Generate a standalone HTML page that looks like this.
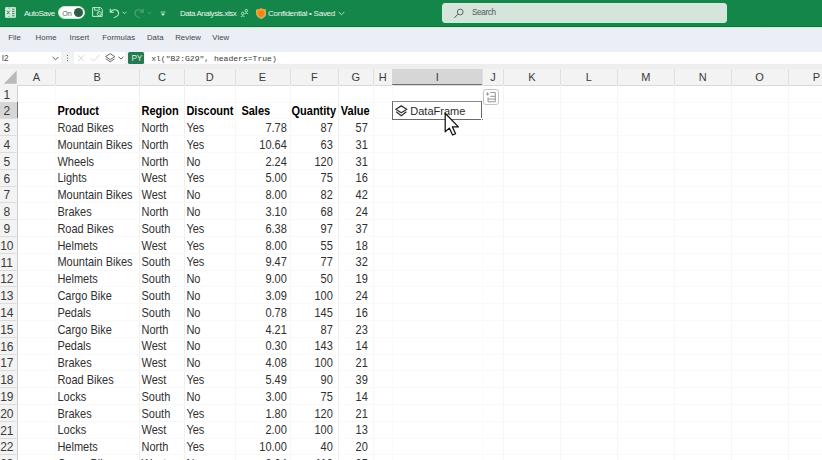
<!DOCTYPE html>
<html><head><meta charset="utf-8">
<style>
*{margin:0;padding:0;box-sizing:border-box}
html,body{width:822px;height:460px;overflow:hidden;background:#fff;font-family:"Liberation Sans",sans-serif;position:relative}
.a{position:absolute}
.t{position:absolute;white-space:nowrap;line-height:1}
#title{left:0;top:0;width:822px;height:27px;background:#15864a;border-bottom:1px solid #0f743e}
#tline{left:0;top:27px;width:822px;height:1px;background:#b8f7d2}
#ribbon{left:0;top:28px;width:822px;height:24px;background:linear-gradient(#e2f3ec,#ebeef5 3px,#ebeef5)}
#fbar{left:0;top:51.7px;width:822px;height:12.3px;background:#f1f2f4}
#hband{left:0;top:64px;width:822px;height:21.3px;background:#f3f3f4}
#hband2{left:0;top:64px;width:822px;height:4.5px;background:#eeeeee}
.tab{font-size:7.8px;color:#454545;top:34.3px;letter-spacing:0.05px}
.ch{font-size:11px;color:#3a3a3a;top:72px;text-align:center}
.rh{font-size:12px;color:#3a3a3a;left:-0.2px;width:14px;text-align:center}
.c{font-size:11px;color:#303030;transform:scaleY(1.08);transform-origin:0 9.3px}
.b{font-weight:bold;color:#000}
.r{text-align:right}
</style></head><body>

<div class="a" id="title"></div><div class="a" id="tline"></div>
<div class="a" id="ribbon"></div><div class="a" id="fbar"></div><div class="a" id="hband"></div><div class="a" id="hband2"></div>
<div class="t tab" style="left:8.2px">File</div>
<div class="t tab" style="left:35.6px">Home</div>
<div class="t tab" style="left:69.5px">Insert</div>
<div class="t tab" style="left:102.2px">Formulas</div>
<div class="t tab" style="left:146.9px">Data</div>
<div class="t tab" style="left:175.2px">Review</div>
<div class="t tab" style="left:212.3px">View</div>
<div class="a" style="left:54.5px;top:69.0px;width:1px;height:16.299999999999997px;background:#e0e0e0"></div>
<div class="t ch" style="left:18px;width:37px">A</div>
<div class="a" style="left:139.0px;top:69.0px;width:1px;height:16.299999999999997px;background:#e0e0e0"></div>
<div class="t ch" style="left:55px;width:84.5px">B</div>
<div class="a" style="left:184.0px;top:69.0px;width:1px;height:16.299999999999997px;background:#e0e0e0"></div>
<div class="t ch" style="left:139.5px;width:45.0px">C</div>
<div class="a" style="left:234.5px;top:69.0px;width:1px;height:16.299999999999997px;background:#e0e0e0"></div>
<div class="t ch" style="left:184.5px;width:50.5px">D</div>
<div class="a" style="left:289.5px;top:69.0px;width:1px;height:16.299999999999997px;background:#e0e0e0"></div>
<div class="t ch" style="left:235px;width:55px">E</div>
<div class="a" style="left:338.0px;top:69.0px;width:1px;height:16.299999999999997px;background:#e0e0e0"></div>
<div class="t ch" style="left:290px;width:48.5px">F</div>
<div class="a" style="left:372.5px;top:69.0px;width:1px;height:16.299999999999997px;background:#e0e0e0"></div>
<div class="t ch" style="left:338.5px;width:34.5px">G</div>
<div class="a" style="left:391.8px;top:69.0px;width:1px;height:16.299999999999997px;background:#e0e0e0"></div>
<div class="t ch" style="left:373px;width:19.30000000000001px">H</div>
<div class="a" style="left:392.3px;top:69.0px;width:90.09999999999997px;height:16.299999999999997px;background:#d6d6d6;border-bottom:1.5px solid #707070"></div>
<div class="a" style="left:481.9px;top:69.0px;width:1px;height:16.299999999999997px;background:#e0e0e0"></div>
<div class="t ch" style="left:392.3px;width:90.09999999999997px">I</div>
<div class="a" style="left:503.1px;top:69.0px;width:1px;height:16.299999999999997px;background:#e0e0e0"></div>
<div class="t ch" style="left:482.4px;width:21.200000000000045px">J</div>
<div class="a" style="left:560.0px;top:69.0px;width:1px;height:16.299999999999997px;background:#e0e0e0"></div>
<div class="t ch" style="left:503.6px;width:56.89999999999998px">K</div>
<div class="a" style="left:616.7px;top:69.0px;width:1px;height:16.299999999999997px;background:#e0e0e0"></div>
<div class="t ch" style="left:560.5px;width:56.700000000000045px">L</div>
<div class="a" style="left:674.0px;top:69.0px;width:1px;height:16.299999999999997px;background:#e0e0e0"></div>
<div class="t ch" style="left:617.2px;width:57.299999999999955px">M</div>
<div class="a" style="left:730.5px;top:69.0px;width:1px;height:16.299999999999997px;background:#e0e0e0"></div>
<div class="t ch" style="left:674.5px;width:56.5px">N</div>
<div class="a" style="left:787.5px;top:69.0px;width:1px;height:16.299999999999997px;background:#e0e0e0"></div>
<div class="t ch" style="left:731px;width:57px">O</div>
<div class="a" style="left:844.5px;top:69.0px;width:1px;height:16.299999999999997px;background:#e0e0e0"></div>
<div class="t ch" style="left:788px;width:57px">P</div>
<div class="a" style="left:0;top:84.8px;width:822px;height:1px;background:#d9d9d9"></div>
<svg class="a" style="left:0;top:64px" width="18" height="22"><path d="M3.8 19.7 L16.7 6.6 L16.7 19.7 Z" fill="#b9b9b9"/></svg>
<div class="a" style="left:0;top:85.3px;width:17.6px;height:400px;background:#f3f3f3"></div>
<div class="a" style="left:17.1px;top:85.3px;width:1px;height:400px;background:#d0d0d0"></div>
<div class="a" style="left:0;top:101.6px;width:17.6px;height:1px;background:#dcdcdc"></div>
<div class="t rh" style="top:88.5px">1</div>
<div class="a" style="left:0;top:102.1px;width:17.6px;height:16.8px;background:#d6d6d6;border-right:1.5px solid #707070"></div>
<div class="a" style="left:0;top:118.39999999999999px;width:17.6px;height:1px;background:#dcdcdc"></div>
<div class="t rh" style="top:105.3px">2</div>
<div class="a" style="left:0;top:135.20000000000002px;width:17.6px;height:1px;background:#dcdcdc"></div>
<div class="t rh" style="top:122.10000000000001px">3</div>
<div class="a" style="left:0;top:152.0px;width:17.6px;height:1px;background:#dcdcdc"></div>
<div class="t rh" style="top:138.89999999999998px">4</div>
<div class="a" style="left:0;top:168.8px;width:17.6px;height:1px;background:#dcdcdc"></div>
<div class="t rh" style="top:155.7px">5</div>
<div class="a" style="left:0;top:185.60000000000002px;width:17.6px;height:1px;background:#dcdcdc"></div>
<div class="t rh" style="top:172.5px">6</div>
<div class="a" style="left:0;top:202.40000000000003px;width:17.6px;height:1px;background:#dcdcdc"></div>
<div class="t rh" style="top:189.3px">7</div>
<div class="a" style="left:0;top:219.20000000000002px;width:17.6px;height:1px;background:#dcdcdc"></div>
<div class="t rh" style="top:206.1px">8</div>
<div class="a" style="left:0;top:236.0px;width:17.6px;height:1px;background:#dcdcdc"></div>
<div class="t rh" style="top:222.89999999999998px">9</div>
<div class="a" style="left:0;top:252.8px;width:17.6px;height:1px;background:#dcdcdc"></div>
<div class="t rh" style="top:239.7px">10</div>
<div class="a" style="left:0;top:269.6px;width:17.6px;height:1px;background:#dcdcdc"></div>
<div class="t rh" style="top:256.5px">11</div>
<div class="a" style="left:0;top:286.40000000000003px;width:17.6px;height:1px;background:#dcdcdc"></div>
<div class="t rh" style="top:273.3px">12</div>
<div class="a" style="left:0;top:303.20000000000005px;width:17.6px;height:1px;background:#dcdcdc"></div>
<div class="t rh" style="top:290.1px">13</div>
<div class="a" style="left:0;top:320.0px;width:17.6px;height:1px;background:#dcdcdc"></div>
<div class="t rh" style="top:306.9px">14</div>
<div class="a" style="left:0;top:336.8px;width:17.6px;height:1px;background:#dcdcdc"></div>
<div class="t rh" style="top:323.7px">15</div>
<div class="a" style="left:0;top:353.6px;width:17.6px;height:1px;background:#dcdcdc"></div>
<div class="t rh" style="top:340.5px">16</div>
<div class="a" style="left:0;top:370.40000000000003px;width:17.6px;height:1px;background:#dcdcdc"></div>
<div class="t rh" style="top:357.3px">17</div>
<div class="a" style="left:0;top:387.20000000000005px;width:17.6px;height:1px;background:#dcdcdc"></div>
<div class="t rh" style="top:374.1px">18</div>
<div class="a" style="left:0;top:404.00000000000006px;width:17.6px;height:1px;background:#dcdcdc"></div>
<div class="t rh" style="top:390.90000000000003px">19</div>
<div class="a" style="left:0;top:420.8px;width:17.6px;height:1px;background:#dcdcdc"></div>
<div class="t rh" style="top:407.7px">20</div>
<div class="a" style="left:0;top:437.6px;width:17.6px;height:1px;background:#dcdcdc"></div>
<div class="t rh" style="top:424.5px">21</div>
<div class="a" style="left:0;top:454.40000000000003px;width:17.6px;height:1px;background:#dcdcdc"></div>
<div class="t rh" style="top:441.3px">22</div>
<div class="a" style="left:0;top:471.20000000000005px;width:17.6px;height:1px;background:#dcdcdc"></div>
<div class="t rh" style="top:458.1px">23</div>
<div class="a" style="left:54.5px;top:85.3px;width:1px;height:400px;background:#fbfbfb"></div>
<div class="a" style="left:139.0px;top:85.3px;width:1px;height:400px;background:#efefef"></div>
<div class="a" style="left:184.0px;top:85.3px;width:1px;height:400px;background:#efefef"></div>
<div class="a" style="left:234.5px;top:85.3px;width:1px;height:400px;background:#f6f6f6"></div>
<div class="a" style="left:289.5px;top:85.3px;width:1px;height:400px;background:#f6f6f6"></div>
<div class="a" style="left:338.0px;top:85.3px;width:1px;height:400px;background:#efefef"></div>
<div class="a" style="left:372.5px;top:85.3px;width:1px;height:400px;background:#f6f6f6"></div>
<div class="a" style="left:391.8px;top:85.3px;width:1px;height:400px;background:#fbfbfb"></div>
<div class="a" style="left:481.9px;top:85.3px;width:1px;height:400px;background:#fbfbfb"></div>
<div class="a" style="left:503.1px;top:85.3px;width:1px;height:400px;background:#f6f6f6"></div>
<div class="a" style="left:560.0px;top:85.3px;width:1px;height:400px;background:#f6f6f6"></div>
<div class="a" style="left:616.7px;top:85.3px;width:1px;height:400px;background:#f6f6f6"></div>
<div class="a" style="left:674.0px;top:85.3px;width:1px;height:400px;background:#f6f6f6"></div>
<div class="a" style="left:730.5px;top:85.3px;width:1px;height:400px;background:#f6f6f6"></div>
<div class="a" style="left:787.5px;top:85.3px;width:1px;height:400px;background:#f6f6f6"></div>
<div class="a" style="left:844.5px;top:85.3px;width:1px;height:400px;background:#f6f6f6"></div>
<div class="a" style="left:18px;top:101.6px;width:804px;height:1px;background:#f9f9f9"></div>
<div class="a" style="left:18px;top:118.39999999999999px;width:804px;height:1px;background:#f9f9f9"></div>
<div class="a" style="left:18px;top:135.20000000000002px;width:804px;height:1px;background:#f9f9f9"></div>
<div class="a" style="left:18px;top:152.0px;width:804px;height:1px;background:#f9f9f9"></div>
<div class="a" style="left:18px;top:168.8px;width:804px;height:1px;background:#f9f9f9"></div>
<div class="a" style="left:18px;top:185.60000000000002px;width:804px;height:1px;background:#f9f9f9"></div>
<div class="a" style="left:18px;top:202.40000000000003px;width:804px;height:1px;background:#f9f9f9"></div>
<div class="a" style="left:18px;top:219.20000000000002px;width:804px;height:1px;background:#f9f9f9"></div>
<div class="a" style="left:18px;top:236.0px;width:804px;height:1px;background:#f9f9f9"></div>
<div class="a" style="left:18px;top:252.8px;width:804px;height:1px;background:#f9f9f9"></div>
<div class="a" style="left:18px;top:269.6px;width:804px;height:1px;background:#f9f9f9"></div>
<div class="a" style="left:18px;top:286.40000000000003px;width:804px;height:1px;background:#f9f9f9"></div>
<div class="a" style="left:18px;top:303.20000000000005px;width:804px;height:1px;background:#f9f9f9"></div>
<div class="a" style="left:18px;top:320.0px;width:804px;height:1px;background:#f9f9f9"></div>
<div class="a" style="left:18px;top:336.8px;width:804px;height:1px;background:#f9f9f9"></div>
<div class="a" style="left:18px;top:353.6px;width:804px;height:1px;background:#f9f9f9"></div>
<div class="a" style="left:18px;top:370.40000000000003px;width:804px;height:1px;background:#f9f9f9"></div>
<div class="a" style="left:18px;top:387.20000000000005px;width:804px;height:1px;background:#f9f9f9"></div>
<div class="a" style="left:18px;top:404.00000000000006px;width:804px;height:1px;background:#f9f9f9"></div>
<div class="a" style="left:18px;top:420.8px;width:804px;height:1px;background:#f9f9f9"></div>
<div class="a" style="left:18px;top:437.6px;width:804px;height:1px;background:#f9f9f9"></div>
<div class="a" style="left:18px;top:454.40000000000003px;width:804px;height:1px;background:#f9f9f9"></div>
<div class="a" style="left:18px;top:471.20000000000005px;width:804px;height:1px;background:#f9f9f9"></div>
<div class="t c b" style="left:57.4px;top:106.1px">Product</div>
<div class="t c b" style="left:141.5px;top:106.1px">Region</div>
<div class="t c b" style="left:186.4px;top:106.1px">Discount</div>
<div class="t c b" style="left:241.4px;top:106.1px">Sales</div>
<div class="t c b" style="left:291.5px;top:106.1px">Quantity</div>
<div class="t c b" style="left:340.8px;top:106.1px">Value</div>
<div class="t c" style="left:57.4px;top:122.9px">Road Bikes</div>
<div class="t c" style="left:141.5px;top:122.9px">North</div>
<div class="t c" style="left:186.4px;top:122.9px">Yes</div>
<div class="t c r" style="right:535.2px;top:122.9px">7.78</div>
<div class="t c r" style="right:489.2px;top:122.9px">87</div>
<div class="t c r" style="right:454.2px;top:122.9px">57</div>
<div class="t c" style="left:57.4px;top:139.7px">Mountain Bikes</div>
<div class="t c" style="left:141.5px;top:139.7px">North</div>
<div class="t c" style="left:186.4px;top:139.7px">Yes</div>
<div class="t c r" style="right:535.2px;top:139.7px">10.64</div>
<div class="t c r" style="right:489.2px;top:139.7px">63</div>
<div class="t c r" style="right:454.2px;top:139.7px">31</div>
<div class="t c" style="left:57.4px;top:156.5px">Wheels</div>
<div class="t c" style="left:141.5px;top:156.5px">North</div>
<div class="t c" style="left:186.4px;top:156.5px">No</div>
<div class="t c r" style="right:535.2px;top:156.5px">2.24</div>
<div class="t c r" style="right:489.2px;top:156.5px">120</div>
<div class="t c r" style="right:454.2px;top:156.5px">31</div>
<div class="t c" style="left:57.4px;top:173.3px">Lights</div>
<div class="t c" style="left:141.5px;top:173.3px">West</div>
<div class="t c" style="left:186.4px;top:173.3px">Yes</div>
<div class="t c r" style="right:535.2px;top:173.3px">5.00</div>
<div class="t c r" style="right:489.2px;top:173.3px">75</div>
<div class="t c r" style="right:454.2px;top:173.3px">16</div>
<div class="t c" style="left:57.4px;top:190.10000000000002px">Mountain Bikes</div>
<div class="t c" style="left:141.5px;top:190.10000000000002px">West</div>
<div class="t c" style="left:186.4px;top:190.10000000000002px">No</div>
<div class="t c r" style="right:535.2px;top:190.10000000000002px">8.00</div>
<div class="t c r" style="right:489.2px;top:190.10000000000002px">82</div>
<div class="t c r" style="right:454.2px;top:190.10000000000002px">42</div>
<div class="t c" style="left:57.4px;top:206.9px">Brakes</div>
<div class="t c" style="left:141.5px;top:206.9px">North</div>
<div class="t c" style="left:186.4px;top:206.9px">No</div>
<div class="t c r" style="right:535.2px;top:206.9px">3.10</div>
<div class="t c r" style="right:489.2px;top:206.9px">68</div>
<div class="t c r" style="right:454.2px;top:206.9px">24</div>
<div class="t c" style="left:57.4px;top:223.7px">Road Bikes</div>
<div class="t c" style="left:141.5px;top:223.7px">South</div>
<div class="t c" style="left:186.4px;top:223.7px">Yes</div>
<div class="t c r" style="right:535.2px;top:223.7px">6.38</div>
<div class="t c r" style="right:489.2px;top:223.7px">97</div>
<div class="t c r" style="right:454.2px;top:223.7px">37</div>
<div class="t c" style="left:57.4px;top:240.5px">Helmets</div>
<div class="t c" style="left:141.5px;top:240.5px">West</div>
<div class="t c" style="left:186.4px;top:240.5px">Yes</div>
<div class="t c r" style="right:535.2px;top:240.5px">8.00</div>
<div class="t c r" style="right:489.2px;top:240.5px">55</div>
<div class="t c r" style="right:454.2px;top:240.5px">18</div>
<div class="t c" style="left:57.4px;top:257.3px">Mountain Bikes</div>
<div class="t c" style="left:141.5px;top:257.3px">South</div>
<div class="t c" style="left:186.4px;top:257.3px">Yes</div>
<div class="t c r" style="right:535.2px;top:257.3px">9.47</div>
<div class="t c r" style="right:489.2px;top:257.3px">77</div>
<div class="t c r" style="right:454.2px;top:257.3px">32</div>
<div class="t c" style="left:57.4px;top:274.1px">Helmets</div>
<div class="t c" style="left:141.5px;top:274.1px">South</div>
<div class="t c" style="left:186.4px;top:274.1px">No</div>
<div class="t c r" style="right:535.2px;top:274.1px">9.00</div>
<div class="t c r" style="right:489.2px;top:274.1px">50</div>
<div class="t c r" style="right:454.2px;top:274.1px">19</div>
<div class="t c" style="left:57.4px;top:290.90000000000003px">Cargo Bike</div>
<div class="t c" style="left:141.5px;top:290.90000000000003px">South</div>
<div class="t c" style="left:186.4px;top:290.90000000000003px">No</div>
<div class="t c r" style="right:535.2px;top:290.90000000000003px">3.09</div>
<div class="t c r" style="right:489.2px;top:290.90000000000003px">100</div>
<div class="t c r" style="right:454.2px;top:290.90000000000003px">24</div>
<div class="t c" style="left:57.4px;top:307.7px">Pedals</div>
<div class="t c" style="left:141.5px;top:307.7px">South</div>
<div class="t c" style="left:186.4px;top:307.7px">No</div>
<div class="t c r" style="right:535.2px;top:307.7px">0.78</div>
<div class="t c r" style="right:489.2px;top:307.7px">145</div>
<div class="t c r" style="right:454.2px;top:307.7px">16</div>
<div class="t c" style="left:57.4px;top:324.5px">Cargo Bike</div>
<div class="t c" style="left:141.5px;top:324.5px">North</div>
<div class="t c" style="left:186.4px;top:324.5px">No</div>
<div class="t c r" style="right:535.2px;top:324.5px">4.21</div>
<div class="t c r" style="right:489.2px;top:324.5px">87</div>
<div class="t c r" style="right:454.2px;top:324.5px">23</div>
<div class="t c" style="left:57.4px;top:341.3px">Pedals</div>
<div class="t c" style="left:141.5px;top:341.3px">West</div>
<div class="t c" style="left:186.4px;top:341.3px">No</div>
<div class="t c r" style="right:535.2px;top:341.3px">0.30</div>
<div class="t c r" style="right:489.2px;top:341.3px">143</div>
<div class="t c r" style="right:454.2px;top:341.3px">14</div>
<div class="t c" style="left:57.4px;top:358.1px">Brakes</div>
<div class="t c" style="left:141.5px;top:358.1px">West</div>
<div class="t c" style="left:186.4px;top:358.1px">No</div>
<div class="t c r" style="right:535.2px;top:358.1px">4.08</div>
<div class="t c r" style="right:489.2px;top:358.1px">100</div>
<div class="t c r" style="right:454.2px;top:358.1px">21</div>
<div class="t c" style="left:57.4px;top:374.90000000000003px">Road Bikes</div>
<div class="t c" style="left:141.5px;top:374.90000000000003px">West</div>
<div class="t c" style="left:186.4px;top:374.90000000000003px">Yes</div>
<div class="t c r" style="right:535.2px;top:374.90000000000003px">5.49</div>
<div class="t c r" style="right:489.2px;top:374.90000000000003px">90</div>
<div class="t c r" style="right:454.2px;top:374.90000000000003px">39</div>
<div class="t c" style="left:57.4px;top:391.70000000000005px">Locks</div>
<div class="t c" style="left:141.5px;top:391.70000000000005px">South</div>
<div class="t c" style="left:186.4px;top:391.70000000000005px">No</div>
<div class="t c r" style="right:535.2px;top:391.70000000000005px">3.00</div>
<div class="t c r" style="right:489.2px;top:391.70000000000005px">75</div>
<div class="t c r" style="right:454.2px;top:391.70000000000005px">14</div>
<div class="t c" style="left:57.4px;top:408.5px">Brakes</div>
<div class="t c" style="left:141.5px;top:408.5px">South</div>
<div class="t c" style="left:186.4px;top:408.5px">Yes</div>
<div class="t c r" style="right:535.2px;top:408.5px">1.80</div>
<div class="t c r" style="right:489.2px;top:408.5px">120</div>
<div class="t c r" style="right:454.2px;top:408.5px">21</div>
<div class="t c" style="left:57.4px;top:425.3px">Locks</div>
<div class="t c" style="left:141.5px;top:425.3px">West</div>
<div class="t c" style="left:186.4px;top:425.3px">Yes</div>
<div class="t c r" style="right:535.2px;top:425.3px">2.00</div>
<div class="t c r" style="right:489.2px;top:425.3px">100</div>
<div class="t c r" style="right:454.2px;top:425.3px">13</div>
<div class="t c" style="left:57.4px;top:442.1px">Helmets</div>
<div class="t c" style="left:141.5px;top:442.1px">North</div>
<div class="t c" style="left:186.4px;top:442.1px">Yes</div>
<div class="t c r" style="right:535.2px;top:442.1px">10.00</div>
<div class="t c r" style="right:489.2px;top:442.1px">40</div>
<div class="t c r" style="right:454.2px;top:442.1px">20</div>
<div class="t c" style="left:57.4px;top:458.90000000000003px">Cargo Bike</div>
<div class="t c" style="left:141.5px;top:458.90000000000003px">West</div>
<div class="t c" style="left:186.4px;top:458.90000000000003px">No</div>
<div class="t c r" style="right:535.2px;top:458.90000000000003px">3.04</div>
<div class="t c r" style="right:489.2px;top:458.90000000000003px">110</div>
<div class="t c r" style="right:454.2px;top:458.90000000000003px">25</div>
<!-- title bar content -->
<svg class="a" style="left:4.5px;top:7.3px" width="11" height="11" viewBox="0 0 11 11">
  <rect x="0.3" y="0.3" width="10.5" height="10.3" rx="1.2" fill="#cdeedb"/>
  <rect x="0.3" y="0.3" width="10.5" height="10.3" rx="1.2" fill="none" stroke="#e8f8ee" stroke-width="0.6"/>
  <path d="M7 2.2 H9.6 M7 4.4 H9.6 M7 6.6 H9.6 M7 8.8 H9.6" stroke="#3f7a57" stroke-width="1"/>
  <path d="M2 3.6 L4.6 7.2 M4.6 3.6 L2 7.2" stroke="#3f7a57" stroke-width="0.9"/>
  <path d="M3.2 1.2 H5.2 M3.2 9.3 H5.2" stroke="#6aa383" stroke-width="0.7"/>
</svg>
<div class="t" style="left:24px;top:9.6px;font-size:8px;color:#e6f8ec;letter-spacing:-0.5px">AutoSave</div>
<div class="a" style="left:58.4px;top:6.2px;width:26.2px;height:13px;border-radius:6.5px;background:#fbfffc;border:1px solid #c2f2d4"></div>
<div class="t" style="left:62.3px;top:9.6px;font-size:7.3px;color:#666;letter-spacing:-0.2px">On</div>
<div class="a" style="left:73.6px;top:8.4px;width:9.1px;height:9px;border-radius:50%;background:#2f5a43"></div>
<!-- save icon -->
<svg class="a" style="left:92px;top:7.4px" width="11" height="10" viewBox="0 0 11 10">
  <path d="M0.6 0.6 H8.6 L10.2 2.2 V9.4 H0.6 Z" fill="none" stroke="#bdf0d0" stroke-width="1"/>
  <path d="M2.6 0.6 V3.2 H7.2 V0.6" fill="none" stroke="#bdf0d0" stroke-width="0.9"/>
  <circle cx="7.3" cy="6.7" r="2.1" fill="#15864a" stroke="#bdf0d0" stroke-width="0.9"/>
  <path d="M5.6 5.2 L7.2 6.6 M9 8.2 L7.4 6.8" stroke="#bdf0d0" stroke-width="0.7"/>
</svg>
<!-- undo -->
<svg class="a" style="left:109px;top:6.6px" width="12" height="12" viewBox="0 0 12 12">
  <path d="M1.3 1.8 V5.2 H4.8" fill="none" stroke="#bdf0d0" stroke-width="1.1"/>
  <path d="M1.6 5 C3.4 2 8.6 2 9.5 5.5 C10.1 8 7.8 9.8 4.8 10.8" fill="none" stroke="#bdf0d0" stroke-width="1.1"/>
</svg>
<svg class="a" style="left:122px;top:11.2px" width="5" height="4"><path d="M0.5 0.8 L2.5 2.8 L4.5 0.8" fill="none" stroke="#bdf0d0" stroke-width="0.9"/></svg>
<!-- redo dim -->
<svg class="a" style="left:132.5px;top:6.6px" width="12" height="12" viewBox="0 0 12 12">
  <path d="M10.2 1.8 V5.2 H6.7" fill="none" stroke="#4fa874" stroke-width="1.1"/>
  <path d="M9.9 5 C8.1 2 2.9 2 2 5.5 C1.4 8 3.7 9.8 6.7 10.8" fill="none" stroke="#4fa874" stroke-width="1.1"/>
</svg>
<svg class="a" style="left:146.8px;top:11.2px" width="5" height="4"><path d="M0.5 0.8 L2.5 2.8 L4.5 0.8" fill="none" stroke="#4fa874" stroke-width="0.9"/></svg>
<!-- customize -->
<svg class="a" style="left:159.5px;top:10.5px" width="6" height="6" viewBox="0 0 6 6">
  <line x1="0.6" y1="1" x2="5.4" y2="1" stroke="#bdf0d0" stroke-width="0.8"/>
  <path d="M0.8 2.6 L3 5 L5.2 2.6 Z" fill="#bdf0d0"/>
</svg>
<div class="t" style="left:180px;top:10px;font-size:7.9px;color:#e6f8ec;letter-spacing:-0.4px">Data Analysis.xlsx</div>
<!-- person icon -->
<svg class="a" style="left:240px;top:7.5px" width="10" height="10" viewBox="0 0 10 10">
  <circle cx="6.3" cy="2.7" r="1.25" fill="none" stroke="#c4f3d6" stroke-width="0.85"/>
  <path d="M4.6 6.2 C4.9 4.7 7.7 4.7 8 6.2" fill="none" stroke="#c4f3d6" stroke-width="0.85"/>
  <circle cx="2.7" cy="5.4" r="1.25" fill="none" stroke="#c4f3d6" stroke-width="0.85"/>
  <path d="M1 8.9 C1.3 7.4 4.1 7.4 4.4 8.9" fill="none" stroke="#c4f3d6" stroke-width="0.85"/>
</svg>
<!-- shield -->
<svg class="a" style="left:255.5px;top:7.6px" width="10.5" height="11" viewBox="0 0 10.5 11">
  <path d="M5.2 0.4 C6.8 1.5 8.4 1.8 9.9 1.8 V5.2 C9.9 8 7.8 9.8 5.2 10.6 C2.6 9.8 0.5 8 0.5 5.2 V1.8 C2 1.8 3.6 1.5 5.2 0.4 Z" fill="#f39a2c" stroke="#e9d48a" stroke-width="0.6"/>
  <path d="M5.2 2.6 C6.2 3.2 7.1 3.4 8 3.4 V5.5 C8 7.2 6.8 8.3 5.2 8.9 C3.6 8.3 2.4 7.2 2.4 5.5 V3.4 C3.3 3.4 4.2 3.2 5.2 2.6 Z" fill="#f28416"/>
</svg>
<div class="t" style="left:268px;top:10px;font-size:8.1px;color:#e6f8ec;letter-spacing:-0.3px">Confidential &#8226; Saved</div>
<svg class="a" style="left:338px;top:10.5px" width="7" height="5"><path d="M0.7 1 L3.5 3.8 L6.3 1" fill="none" stroke="#bdf0d0" stroke-width="0.9"/></svg>
<!-- search -->
<div class="a" style="left:442.2px;top:2.7px;width:285.3px;height:20px;border-radius:3px;background:#d6e5dc;border:1px solid #c4f2d6"></div>
<svg class="a" style="left:453px;top:7.5px" width="12" height="11" viewBox="0 0 12 11">
  <circle cx="7.2" cy="4" r="2.9" fill="none" stroke="#555" stroke-width="0.9"/>
  <line x1="5.1" y1="6.1" x2="1.3" y2="9.9" stroke="#555" stroke-width="1"/>
</svg>
<div class="t" style="left:472px;top:9.2px;font-size:8.2px;color:#555;letter-spacing:-0.38px">Search</div>

<!-- formula bar -->
<div class="a" style="left:0;top:51.9px;width:60.6px;height:11.8px;background:#fff"></div>
<div class="t" style="left:1.8px;top:55px;font-size:8.2px;color:#444">I2</div>
<svg class="a" style="left:52px;top:56px" width="7" height="5"><path d="M0.7 1 L3.5 3.8 L6.3 1" fill="none" stroke="#444" stroke-width="0.9"/></svg>
<div class="a" style="left:67px;top:55px;width:1.1px;height:1.1px;background:#666;box-shadow:0 2.6px 0 #666,0 5.2px 0 #666"></div>
<div class="a" style="left:74px;top:51.9px;width:51.4px;height:11.8px;background:#fff"></div><div class="a" style="left:144.5px;top:51.9px;width:678px;height:11.8px;background:#fff"></div>
<svg class="a" style="left:77px;top:54px" width="25" height="9" viewBox="0 0 25 9">
  <path d="M1 1.3 L6.8 6.9 M6.8 1.3 L1 6.9" stroke="#cccccc" stroke-width="0.8"/>
  <path d="M13.5 4.4 L16.5 7 L22.6 0.9" fill="none" stroke="#cccccc" stroke-width="0.8"/>
</svg>
<svg class="a" style="left:105.3px;top:53px" width="11" height="10" viewBox="0 0 11 10">
  <path d="M5.2 0.6 L9.8 3.6 L5.2 6.6 L0.6 3.6 Z" fill="none" stroke="#555" stroke-width="0.9"/>
  <path d="M0.8 5.8 L5.2 8.8 L9.6 5.8" fill="none" stroke="#555" stroke-width="0.9"/>
</svg>
<svg class="a" style="left:118.3px;top:56.2px" width="6" height="4"><path d="M0.5 0.7 L3 3.2 L5.5 0.7" fill="none" stroke="#444" stroke-width="0.9"/></svg>
<div class="a" style="left:128.3px;top:51.9px;width:15.8px;height:12px;background:#257a4f;border-radius:1.5px"></div>
<div class="t" style="left:131.5px;top:54.2px;font-size:8.3px;color:#dff3e6;letter-spacing:-0.3px">PY</div>
<div class="t" style="left:151.2px;top:54.6px;font-family:'Liberation Mono',monospace;font-size:8.05px;color:#3a3a3a">xl("B2:G29", headers=True)</div>

<!-- DataFrame cell -->
<div class="a" style="left:392.1px;top:101.1px;width:90.4px;height:18.7px;border:1.4px solid #6a6a6a;border-top-color:#8a8a8a;background:#fff"></div>
<div class="a" style="left:480.8px;top:118px;width:3px;height:3px;background:#6a6a6a;border:0.7px solid #fff"></div>
<svg class="a" style="left:395.3px;top:105px" width="13" height="12" viewBox="0 0 13 12">
  <path d="M6.3 0.9 L11.8 4.3 L6.3 7.7 L0.8 4.3 Z" fill="none" stroke="#333" stroke-width="1.3" stroke-linejoin="round"/>
  <path d="M1.2 6.8 L6.3 10.8 L11.4 6.8" fill="none" stroke="#333" stroke-width="1.3" stroke-linejoin="round"/>
</svg>
<div class="t" style="left:410.3px;top:106.3px;font-size:11px;color:#2a2a2a">DataFrame</div>
<!-- paste options -->
<div class="a" style="left:483.2px;top:89px;width:16px;height:16px;border:1px solid #c4c4c4;border-radius:2.8px;background:#fff"></div>
<svg class="a" style="left:483.2px;top:89px" width="16" height="16" viewBox="0 0 16 16">
  <path d="M4.6 3.4 V6.6 M3 5 H6.2" stroke="#8a8a8a" stroke-width="0.9"/>
  <path d="M7.2 3.6 H12.3 V12.8 H5 V8.4" fill="none" stroke="#8a8a8a" stroke-width="0.9"/>
  <path d="M7.2 7.3 H12.3 M5 10.1 H12.3" stroke="#8a8a8a" stroke-width="0.9"/>
</svg>
<!-- cursor -->
<svg class="a" style="left:443.8px;top:112.3px" width="18" height="24" viewBox="0 0 18 24">
  <path d="M1.2 1.2 L1.2 19.8 L5.3 16.1 L8.6 23 L11.6 21.7 L8.4 14.9 L14.4 14.9 Z" fill="#fff" stroke="#111" stroke-width="1.25" stroke-linejoin="round"/>
</svg>

</body></html>
